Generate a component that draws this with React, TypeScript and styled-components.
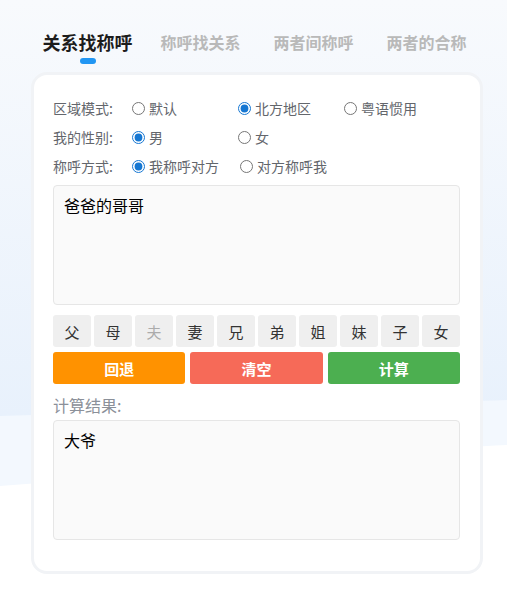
import React, { useState } from 'react';
import styled, { createGlobalStyle } from 'styled-components';

const GlobalStyle = createGlobalStyle`
  html, body {
    margin: 0;
    padding: 0;
    background: #ffffff;
  }
  * {
    box-sizing: border-box;
  }
  body {
    font-family: "Noto Sans CJK SC", "Noto Sans", sans-serif;
  }
`;

const Page = styled.main`
  position: relative;
  width: 507px;
  min-height: 592px;
  overflow: hidden;
`;

const Backdrop = styled.svg`
  position: absolute;
  left: 0;
  top: 0;
  z-index: 0;
`;

const Content = styled.div`
  position: relative;
  z-index: 1;
  padding-left: 31px;
`;

const Tabs = styled.nav`
  display: flex;
  width: 452px;
  padding-top: 27px;
`;

const Tab = styled.div<{ $active?: boolean }>`
  flex: 1;
  display: flex;
  flex-direction: column;
  align-items: center;
  font-weight: 700;
  font-size: ${(p) => (p.$active ? '18px' : '16px')};
  line-height: 30px;
  color: ${(p) => (p.$active ? '#1c1c1c' : '#b9b9b9')};
  cursor: pointer;
`;

const Indicator = styled.span<{ $show?: boolean }>`
  width: 16px;
  height: 6px;
  margin-top: 1px;
  border-radius: 3px;
  background: ${(p) => (p.$show ? '#2196f3' : 'transparent')};
`;

const Card = styled.section`
  width: 452px;
  height: 502px;
  margin-top: 8px;
  border: 3px solid #f1f3f6;
  border-radius: 16px;
  background: #ffffff;
  padding: 18px 20px 0 19px;
`;

const FormRow = styled.div`
  display: flex;
  align-items: center;
  height: 29px;
  font-size: 14px;
  color: #63666c;
`;

const RowLabel = styled.span`
  width: 77px;
  flex-shrink: 0;
`;

const Option = styled.label<{ $wide?: boolean }>`
  display: flex;
  align-items: center;
  min-width: ${(p) => (p.$wide ? '108px' : '106px')};
  cursor: pointer;

  input {
    width: 13px;
    height: 13px;
    margin: 2px 4px 0 2px;
    accent-color: #1677d2;
  }
`;

const TextBox = styled.div`
  height: 120px;
  margin-top: 5px;
  padding: 7px 10px;
  border: 1px solid #e6e6e6;
  border-radius: 4px;
  background: #fafafa;
  font-size: 16px;
  line-height: 24px;
  color: #000000;
`;

const Keys = styled.div`
  display: flex;
  justify-content: space-between;
  margin-top: 10px;
`;

const Key = styled.button<{ $disabled?: boolean }>`
  width: 38px;
  height: 32px;
  border: none;
  border-radius: 3px;
  background: #efefef;
  font-family: inherit;
  font-size: 15px;
  color: ${(p) => (p.$disabled ? '#ababab' : '#333333')};
  padding: 0;
  cursor: pointer;
`;

const Actions = styled.div`
  display: grid;
  grid-template-columns: repeat(3, 1fr);
  gap: 5px;
  margin-top: 5px;
`;

const ActionButton = styled.button<{ $color: string }>`
  height: 32px;
  border: none;
  border-radius: 3px;
  background: ${(p) => p.$color};
  color: #ffffff;
  font-family: inherit;
  font-size: 15px;
  font-weight: 700;
  cursor: pointer;
`;

const ResultLabel = styled.div`
  margin-top: 9px;
  font-size: 16px;
  line-height: 24px;
  color: #8b9099;
`;

const ResultBox = styled(TextBox)`
  margin-top: 3px;
`;

const tabs = ['关系找称呼', '称呼找关系', '两者间称呼', '两者的合称'];
const keys = ['父', '母', '夫', '妻', '兄', '弟', '姐', '妹', '子', '女'];

const App = () => {
  const [mode, set_mode] = useState('north');
  const [sex, set_sex] = useState('male');
  const [way, set_way] = useState('me');

  return (
    <Page>
      <GlobalStyle />
      <Backdrop width="507" height="592" viewBox="0 0 507 592">
        <defs>
          <linearGradient id="sky" x1="0" y1="0" x2="0" y2="1">
            <stop offset="0" stopColor="#f8fafd" />
            <stop offset="1" stopColor="#e8f1fc" />
          </linearGradient>
        </defs>
        <path d="M0 0 H507 V445 C400 450 200 470 0 486 Z" fill="#f3f8fe" />
        <path d="M0 0 H507 V400 C400 404 200 410 0 416 Z" fill="url(#sky)" />
      </Backdrop>
      <Content>
        <Tabs>
          {tabs.map((t, i) => (
            <Tab key={t} $active={i === 0}>
              {t}
              <Indicator $show={i === 0} />
            </Tab>
          ))}
        </Tabs>

        <Card>
          <FormRow>
            <RowLabel>区域模式:</RowLabel>
            <Option>
              <input type="radio" name="mode" checked={mode === 'default'} onChange={() => set_mode('default')} />
              默认
            </Option>
            <Option>
              <input type="radio" name="mode" checked={mode === 'north'} onChange={() => set_mode('north')} />
              北方地区
            </Option>
            <Option>
              <input type="radio" name="mode" checked={mode === 'yue'} onChange={() => set_mode('yue')} />
              粤语惯用
            </Option>
          </FormRow>
          <FormRow>
            <RowLabel>我的性别:</RowLabel>
            <Option>
              <input type="radio" name="sex" checked={sex === 'male'} onChange={() => set_sex('male')} />
              男
            </Option>
            <Option>
              <input type="radio" name="sex" checked={sex === 'female'} onChange={() => set_sex('female')} />
              女
            </Option>
          </FormRow>
          <FormRow>
            <RowLabel>称呼方式:</RowLabel>
            <Option $wide>
              <input type="radio" name="way" checked={way === 'me'} onChange={() => set_way('me')} />
              我称呼对方
            </Option>
            <Option>
              <input type="radio" name="way" checked={way === 'other'} onChange={() => set_way('other')} />
              对方称呼我
            </Option>
          </FormRow>

          <TextBox>爸爸的哥哥</TextBox>

          <Keys>
            {keys.map((k) => (
              <Key key={k} $disabled={k === '夫'}>{k}</Key>
            ))}
          </Keys>

          <Actions>
            <ActionButton $color="#ff9200">回退</ActionButton>
            <ActionButton $color="#f66a58">清空</ActionButton>
            <ActionButton $color="#4caf50">计算</ActionButton>
          </Actions>

          <ResultLabel>计算结果:</ResultLabel>
          <ResultBox>大爷</ResultBox>
        </Card>
      </Content>
    </Page>
  );
};

export default App;
